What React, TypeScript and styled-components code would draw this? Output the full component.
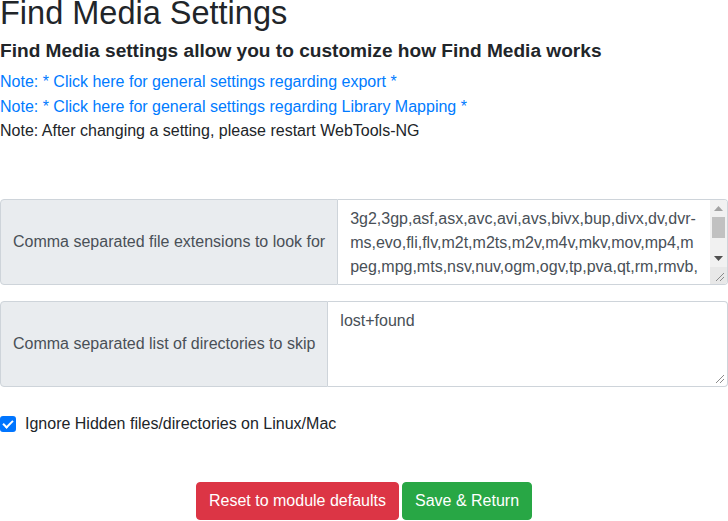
import React, { useState } from "react";
import styled, { createGlobalStyle } from "styled-components";

const COLORS = {
  text: "#212529",
  muted: "#495057",
  link: "#007bff",
  addonBg: "#e9ecef",
  border: "#ced4da",
  danger: "#dc3545",
  success: "#28a745",
  check: "#0075ff",
  track: "#f1f1f1",
  thumb: "#c1c1c1",
};

const FONT = `"Segoe UI", "Liberation Sans", Arial, sans-serif`;

const GlobalStyle = createGlobalStyle`
  html, body {
    margin: 0;
    padding: 0;
    background: #fff;
  }
  body {
    font-family: ${FONT};
    font-size: 16px;
    color: ${COLORS.text};
    overflow: hidden;
  }
  * {
    box-sizing: border-box;
  }
`;

const extensions =
  "3g2,3gp,asf,asx,avc,avi,avs,bivx,bup,divx,dv,dvr-ms,evo,fli,flv,m2t,m2ts,m2v,m4v,mkv,mov,mp4,mpeg,mpg,mts,nsv,nuv,ogm,ogv,tp,pva,qt,rm,rmvb,sdp,svq3,strm,ts,ty,vdr,viv,vob,vp3,wmv,wpl,wtv,xsp,xvid,webm,ifo,img,iso,dat";

function Grip() {
  return (
    <svg width="11" height="11" viewBox="0 0 11 11">
      <path d="M10 2 L2 10 M10 6 L6 10" stroke="#8a8a8a" strokeWidth="1" fill="none" />
    </svg>
  );
}

function FakeScrollbar() {
  return (
    <ScrollBar>
      <ScrollButton>
        <svg width="9" height="5" viewBox="0 0 9 5">
          <path d="M4.5 0 L9 5 L0 5 Z" fill="#a3a3a3" />
        </svg>
      </ScrollButton>
      <ScrollTrack>
        <ScrollThumb />
      </ScrollTrack>
      <ScrollButton>
        <svg width="9" height="5" viewBox="0 0 9 5">
          <path d="M0 0 L9 0 L4.5 5 Z" fill="#505050" />
        </svg>
      </ScrollButton>
      <Corner>
        <Grip />
      </Corner>
    </ScrollBar>
  );
}

export default function App() {
  const [exts, setExts] = useState(extensions);
  const [skip, setSkip] = useState("lost+found");
  const [ignoreHidden, setIgnoreHidden] = useState(true);

  return (
    <Page>
      <GlobalStyle />
      <Title>Find Media Settings</Title>
      <SubTitle>Find Media settings allow you to customize how Find Media works</SubTitle>
      <Notes>
        <NoteLink href="#">Note: * Click here for general settings regarding export *</NoteLink>
        <NoteLink href="#">Note: * Click here for general settings regarding Library Mapping *</NoteLink>
        <Note>Note: After changing a setting, please restart WebTools-NG</Note>
      </Notes>

      <Form>
        <InputGroup>
          <Addon>Comma separated file extensions to look for</Addon>
          <TextBox>
            <TextArea value={exts} onChange={(e) => setExts(e.target.value)} />
            <FakeScrollbar />
          </TextBox>
        </InputGroup>
        <InputGroup>
          <Addon>Comma separated list of directories to skip</Addon>
          <TextBox>
            <TextArea value={skip} onChange={(e) => setSkip(e.target.value)} />
            <CornerGrip>
              <Grip />
            </CornerGrip>
          </TextBox>
        </InputGroup>

        <CheckRow>
          <CheckInput
            type="checkbox"
            checked={ignoreHidden}
            onChange={(e) => setIgnoreHidden(e.target.checked)}
          />
          <span>Ignore Hidden files/directories on Linux/Mac</span>
        </CheckRow>

        <Buttons>
          <Button $variant="danger">Reset to module defaults</Button>
          <Button $variant="success">Save &amp; Return</Button>
        </Buttons>
      </Form>
    </Page>
  );
}

const Page = styled.div`
  width: 728px;
`;

const Title = styled.h1`
  margin: -6px 0 0;
  font-size: 32.5px;
  font-weight: 500;
  line-height: 38px;
`;

const SubTitle = styled.h5`
  margin: 7px 0 0;
  font-size: 19.1px;
  font-weight: 700;
  line-height: 23px;
`;

const Notes = styled.div`
  margin-top: 8px;
  display: flex;
  flex-direction: column;
  line-height: 24.5px;
`;

const NoteLink = styled.a`
  color: ${COLORS.link};
  text-decoration: none;
`;

const Note = styled.span`
  color: ${COLORS.text};
`;

const Form = styled.div`
  margin-top: 55px;
  display: flex;
  flex-direction: column;
`;

const InputGroup = styled.div`
  display: flex;
  align-items: stretch;
  width: 100%;
  height: 86px;
  margin-bottom: 16px;
`;

const Addon = styled.div`
  display: flex;
  align-items: center;
  padding: 6px 12px;
  background: ${COLORS.addonBg};
  border: 1px solid ${COLORS.border};
  border-radius: 4px 0 0 4px;
  color: ${COLORS.muted};
  white-space: nowrap;
  line-height: 1.5;
`;

const TextBox = styled.div`
  position: relative;
  flex: 1;
  min-width: 0;
  display: flex;
  align-items: flex-start;
  background: #fff;
  border: 1px solid ${COLORS.border};
  border-left: none;
  border-radius: 0 4px 4px 0;
  overflow: hidden;
`;

const TextArea = styled.textarea`
  flex: 1;
  min-width: 0;
  height: 79px;
  padding: 7px 12px 0;
  margin: 0;
  font-family: ${FONT};
  font-size: 16px;
  line-height: 24px;
  color: ${COLORS.muted};
  background: transparent;
  border: none;
  outline: none;
  resize: none;
  overflow: hidden;
`;

const ScrollBar = styled.div`
  align-self: stretch;
  width: 17px;
  display: flex;
  flex-direction: column;
  background: ${COLORS.track};
`;

const ScrollButton = styled.div`
  height: 17px;
  display: flex;
  align-items: center;
  justify-content: center;
`;

const ScrollTrack = styled.div`
  flex: 1;
  padding: 0 2px;
`;

const ScrollThumb = styled.div`
  height: 21px;
  background: ${COLORS.thumb};
`;

const Corner = styled.div`
  height: 17px;
  background: #e8e8e8;
  display: flex;
  align-items: flex-end;
  justify-content: flex-end;
  padding: 0 2px 2px 0;
`;

const CornerGrip = styled.div`
  position: absolute;
  right: 2px;
  bottom: 2px;
  display: flex;
`;

const CheckRow = styled.label`
  display: flex;
  align-items: center;
  gap: 9px;
  margin-top: 9px;
  line-height: 24px;
  color: ${COLORS.text};
`;

const CheckInput = styled.input`
  appearance: none;
  -webkit-appearance: none;
  width: 16px;
  height: 16px;
  margin: 0;
  border-radius: 3px;
  background-color: ${COLORS.check};
  position: relative;
  flex-shrink: 0;

  &:checked::after {
    content: "";
    position: absolute;
    left: 5px;
    top: 2.5px;
    width: 4px;
    height: 8px;
    border: solid #fff;
    border-width: 0 2px 2px 0;
    transform: rotate(45deg);
  }
`;

const Buttons = styled.div`
  display: flex;
  justify-content: center;
  gap: 3px;
  margin-top: 46px;
`;

const Button = styled.button<{ $variant: "danger" | "success" }>`
  font-family: ${FONT};
  font-size: 16px;
  line-height: 24px;
  padding: 6px 12px;
  border: 1px solid transparent;
  border-radius: 4px;
  color: #fff;
  cursor: pointer;
  background: ${({ $variant }) =>
    $variant === "danger" ? COLORS.danger : COLORS.success};
  border-color: ${({ $variant }) =>
    $variant === "danger" ? COLORS.danger : COLORS.success};
`;
